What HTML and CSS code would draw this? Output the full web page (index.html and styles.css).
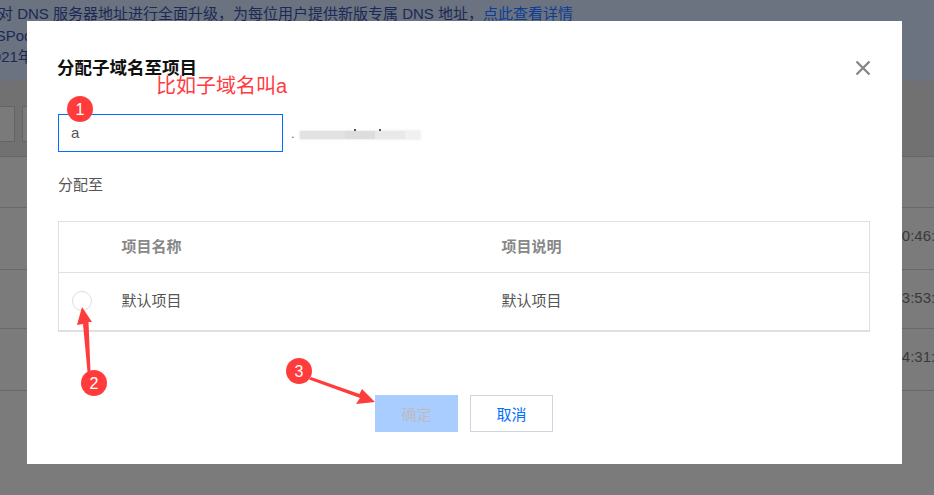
FILE: index.html
```html
<!DOCTYPE html>
<html lang="zh-CN">
<head>
<meta charset="utf-8">
<title>分配子域名至项目</title>
<link rel="stylesheet" href="styles.css">
</head>
<body>
<div class="page">
  <div class="notice">
    <div class="notice-line notice-first">对 DNS 服务器地址进行全面升级，为每位用户提供新版专属 DNS 地址，<a class="notice-link">点此查看详情</a></div>
    <div class="notice-line notice-second">DNSPod</div>
    <div class="notice-line notice-third">2021年</div>
  </div>
  <div class="toolbar">
    <div class="tool-btn"></div>
    <div class="tool-btn tool-wide"></div>
  </div>
  <div class="bg-rows">
    <div class="bg-row bg-head"></div>
    <div class="bg-row">10:46:</div>
    <div class="bg-row bg-short">13:53:</div>
    <div class="bg-row">14:31:</div>
  </div>
</div>

<div class="modal">
  <div class="modal-head">
    <h2 class="modal-title">分配子域名至项目</h2>
    <svg class="close-icon" width="16" height="16" viewBox="0 0 16 16"><path d="M1.500 1.500 14.500 14.500M14.500 1.500 1.500 14.500" stroke="#888" stroke-width="2.400" fill="none"/></svg>
  </div>
  <div class="domain-row">
    <div class="domain-input">a</div>
    <span class="domain-dot">.</span>
    <div class="domain-blur"><i class="speck speck-a"></i><i class="speck speck-b"></i></div>
  </div>
  <div class="assign-label">分配至</div>
  <table class="project-table">
    <thead>
      <tr><th class="col-radio"></th><th class="col-name">项目名称</th><th>项目说明</th></tr>
    </thead>
    <tbody>
      <tr><td class="col-radio"><span class="radio"></span></td><td>默认项目</td><td>默认项目</td></tr>
    </tbody>
  </table>
  <div class="modal-foot">
    <button class="btn btn-ok">确定</button>
    <button class="btn btn-cancel">取消</button>
  </div>
</div>

<div class="note">比如子域名叫a</div>
<svg class="marks" width="934" height="495" viewBox="0 0 934 495">
  <polygon class="mark" points="82,307 92,322 88.500,322 90.500,372 87.500,372 83,324 77,325"/>
  <polygon class="mark" points="375,402 362,389 359.500,394 311,377 309,379.500 360,398 356,404"/>
  <circle class="mark" cx="80" cy="109" r="13"/>
  <circle class="mark" cx="94" cy="383" r="13"/>
  <circle class="mark" cx="299" cy="371" r="13"/>
  <text class="mark-num" x="80" y="114.500">1</text>
  <text class="mark-num" x="94" y="388.500">2</text>
  <text class="mark-num" x="299" y="376.500">3</text>
</svg>
</body>
</html>
```
FILE: styles.css
```css
* { box-sizing: border-box; }
html, body { margin: 0; padding: 0; height: 100%; overflow: hidden; }
body {
  position: relative;
  width: 934px;
  height: 495px;
  background: #7b7b7b;
  font-family: "Liberation Sans", "Noto Sans CJK SC", sans-serif;
  color: #4a4a4a;
}
.page { width: 934px; height: 495px; overflow: hidden; }
.notice {
  height: 81px;
  padding-top: 3px;
  background: #6b7280;
  color: #1a2a55;
  font-size: 15px;
  white-space: nowrap;
}
.notice-line { height: 21.500px; line-height: 21.500px; }
.notice-first { margin-left: -2px; }
.notice-second { margin-left: -26px; }
.notice-third { margin-left: -15.500px; }
.notice-link { color: #0b3d94; }
.toolbar {
  display: flex;
  gap: 7px;
  height: 75px;
  padding-top: 25px;
  margin-left: -10px;
  background: #717171;
}
.tool-btn { width: 25px; height: 36px; border: 1px solid #646464; background: #7a7a7a; }
.tool-wide { width: 120px; }
.bg-rows { border-top: 1px solid #666; }
.bg-row {
  height: 62px;
  padding-left: 893.500px;
  border-bottom: 1px solid #686868;
  font-size: 15px;
  line-height: 56px;
  color: #3a3a3a;
  white-space: nowrap;
}
.bg-head { height: 51px; }
.bg-short { height: 59px; }

.modal {
  position: absolute;
  left: 27px;
  top: 21px;
  width: 875px;
  height: 443px;
  padding: 35px 31px 0;
  background: #fff;
}
.modal-head { display: flex; justify-content: space-between; align-items: center; height: 24px; }
.modal-title { margin: 0 0 0 -1px; font-size: 17.500px; font-weight: 700; color: #111; line-height: 24px; }
.domain-row { display: flex; align-items: center; margin-top: 34px; height: 38px; }
.domain-input {
  width: 225px;
  height: 38px;
  padding-left: 12px;
  border: 1px solid #006eff;
  font-size: 15px;
  line-height: 36px;
  color: #555;
}
.domain-dot { margin: 1px 0 0 8px; width: 9px; font-size: 13px; line-height: 13px; color: #666; }
.domain-blur {
  position: relative;
  width: 120px;
  height: 8px;
  margin-top: 3px;
  box-shadow: 0 0 2px 1px #f1f1f1;
  background: linear-gradient(90deg, #e2e2e2 0 45px, #dddddd 45px 75px, #e9e9e9 75px 105px, #f0f0f0 105px);
}
.speck { position: absolute; top: -2px; width: 2px; height: 2px; background: #555; }
.speck-a { left: 54px; }
.speck-b { left: 79px; }
.assign-label { margin-top: 23px; font-size: 15px; line-height: 20px; color: #555; }
.project-table {
  width: 812px;
  margin-top: 26px;
  border: 1px solid #e0e0e0;
  border-bottom-width: 2px;
  border-collapse: separate;
  border-spacing: 0;
  table-layout: fixed;
  font-size: 15px;
}
.project-table th {
  height: 51px;
  padding: 0 0 4px;
  border-bottom: 1px solid #e0e0e0;
  text-align: left;
  font-weight: 700;
  color: #888;
}
.project-table td { height: 57px; padding: 0 0 5px; color: #555; }
.project-table .col-radio { width: 62.500px; }
.project-table .col-name { width: 380px; }
.project-table td.col-radio { padding-left: 13px; padding-bottom: 1px; }
.radio {
  display: block;
  width: 20px;
  height: 20px;
  border: 1px solid #ddd;
  border-radius: 50%;
}
.modal-foot { display: flex; justify-content: center; gap: 12px; margin: 63px 1px 0 0; }
.btn { width: 83px; height: 37px; padding: 0; font: inherit; font-size: 15px; }
.btn-ok { border: 0; background: #aacdff; color: #b9bcc2; }
.btn-cancel { border: 1px solid #cfd5de; background: #fff; color: #006eff; }

.note {
  position: absolute;
  left: 156px;
  top: 72px;
  font-size: 20px;
  line-height: 28px;
  color: #ff3b3f;
  white-space: nowrap;
}
.marks { position: absolute; left: 0; top: 0; pointer-events: none; }
.mark { fill: #ff3b3b; }
.mark-num { fill: #fff; font-size: 16px; text-anchor: middle; }
```
